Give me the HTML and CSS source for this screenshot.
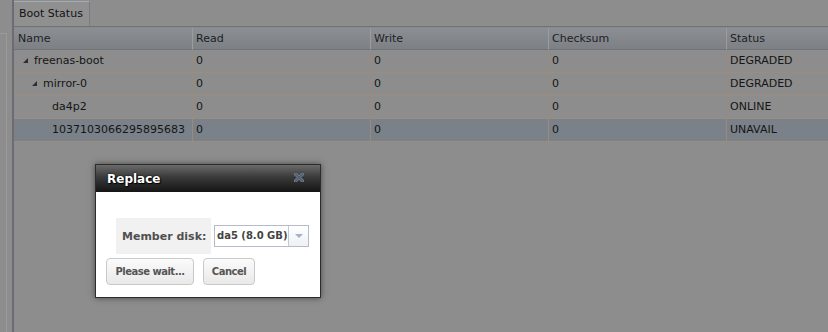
FILE: index.html
```html
<!DOCTYPE html>
<html>
	<head>
		<meta charset="utf-8">
		<title>Boot Status</title>
		<link rel="stylesheet" href="styles.css">
	</head>
	<body>
		<div class="shell">
			<div class="sidebar">
				<div class="sidebar-box"></div>
			</div>
			<div class="main">
				<div class="tabstrip">
					<div class="tab">Boot Status</div>
				</div>
				<div class="grid">
					<div class="row head">
						<div class="cell first">Name</div>
						<div class="cell">Read</div>
						<div class="cell">Write</div>
						<div class="cell">Checksum</div>
						<div class="cell">Status</div>
					</div>
					<div class="row">
						<div class="cell first lvl0"><span class="expando"></span>freenas-boot</div>
						<div class="cell">0</div>
						<div class="cell">0</div>
						<div class="cell">0</div>
						<div class="cell">DEGRADED</div>
					</div>
					<div class="row">
						<div class="cell first lvl1"><span class="expando"></span>mirror-0</div>
						<div class="cell">0</div>
						<div class="cell">0</div>
						<div class="cell">0</div>
						<div class="cell">DEGRADED</div>
					</div>
					<div class="row">
						<div class="cell first lvl2"><span class="leaf"></span>da4p2</div>
						<div class="cell">0</div>
						<div class="cell">0</div>
						<div class="cell">0</div>
						<div class="cell">ONLINE</div>
					</div>
					<div class="row selected">
						<div class="cell first lvl2"><span class="leaf"></span>1037103066295895683</div>
						<div class="cell">0</div>
						<div class="cell">0</div>
						<div class="cell">0</div>
						<div class="cell">UNAVAIL</div>
					</div>
				</div>
			</div>
		</div>

		<div class="dialog">
			<div class="dialog-title">
				<span>Replace</span>
				<svg class="close" width="10" height="9" viewBox="0 0 10 9">
					<path d="M1.5 1 L8.5 8 M8.5 1 L1.5 8" stroke="#6f7d8c" stroke-width="3.2" stroke-linecap="round"/>
					<path d="M1.5 1 L8.5 8 M8.5 1 L1.5 8" stroke="#4f5e70" stroke-width="1.6" stroke-linecap="round"/>
				</svg>
			</div>
			<div class="dialog-body">
				<div class="field">
					<label class="field-label">Member disk:</label>
					<div class="select">
						<span class="select-value">da5 (8.0 GB)</span>
						<span class="select-arrow"></span>
					</div>
				</div>
				<div class="buttons">
					<button class="btn wait">Please wait...</button>
					<button class="btn cancel">Cancel</button>
				</div>
			</div>
		</div>
	</body>
</html>
```

FILE: styles.css
```css
html, body {
	margin: 0;
	height: 100%;
	overflow: hidden;
}

body {
	background: #8d8d8d;
	font-family: "DejaVu Sans", Verdana, sans-serif;
	font-size: 11px;
	color: #151515;
}

.shell {
	display: flex;
	height: 100%;
}

.sidebar {
	width: 12px;
	flex: none;
}

.sidebar-box {
	width: 6px;
	height: calc(100% - 33px);
	margin-top: 33px;
	border-top: 1px solid #9b9b9b;
	border-right: 1px solid #9b9b9b;
}

.main {
	flex: 1;
	border-left: 2px solid #6c6c72;
	overflow: hidden;
}

/* tabs */

.tabstrip {
	height: 27px;
	padding-top: 1px;
	box-sizing: border-box;
	border-bottom: 1px solid #737373;
	display: flex;
}

.tab {
	width: 76px;
	box-sizing: border-box;
	padding-left: 5px;
	border-top: 1px solid #a3abb3;
	border-right: 1px solid #7b7b7b;
	background: #909090;
	line-height: 24px;
	color: #141414;
}

/* grid */

.grid {
	width: 891px;
}

.row {
	display: grid;
	grid-template-columns: 179px repeat(4, 178px);
}

.cell {
	height: 23px;
	box-sizing: border-box;
	padding-left: 3px;
	line-height: 22px;
	white-space: nowrap;
	border-right: 1px solid #998a7d;
	border-bottom: 1px solid #9a8c7f;
}

.cell.first {
	padding-left: 4px;
}

.head {
	border-top: 1px solid #858a90;
	background: linear-gradient(#8b8e92, #7c8084);
}

.head .cell {
	height: 22px;
	line-height: 21px;
	color: #1b1f25;
	border-right-color: #9a9c9e;
	border-bottom-color: #6e7378;
}

.selected {
	background: #7a8189;
}

.cell.lvl0 {
	padding-left: 9px;
}

.cell.lvl1 {
	padding-left: 18px;
}

.cell.lvl2 {
	padding-left: 27px;
}

.leaf {
	display: inline-block;
	width: 11px;
}

.expando {
	display: inline-block;
	width: 0;
	height: 0;
	margin-right: 6px;
	border-left: 5px solid transparent;
	border-bottom: 5px solid #2e2e2e;
	vertical-align: 1px;
}

/* dialog */

.dialog {
	position: absolute;
	left: 95px;
	top: 164px;
	width: 226px;
	box-sizing: border-box;
	border: 1px solid #2c2c2c;
	background: #fff;
	box-shadow: 0 0 6px rgba(0, 0, 0, 0.5);
}

.dialog-title {
	height: 27px;
	display: flex;
	align-items: center;
	justify-content: space-between;
	padding: 0 16px 0 11px;
	background: linear-gradient(#6a6a6a, #3a3a3a 45%, #151515);
	color: #fff;
	font-weight: bold;
	font-size: 12px;
	text-shadow: 0 0 2px #000, 1px 1px 1px #000;
}

.close {
	margin-top: -2px;
}

.dialog-body {
	padding: 26px 10px 12px;
}

.field {
	display: flex;
	align-items: center;
	margin-left: 10px;
}

.field-label {
	width: 95px;
	height: 36px;
	box-sizing: border-box;
	padding-left: 6px;
	display: flex;
	align-items: center;
	background: #f1f1f1;
	color: #505050;
	font-weight: bold;
}

.select {
	width: 95px;
	height: 22px;
	margin-left: 3px;
	box-sizing: border-box;
	border: 1px solid #b4bcc7;
	display: flex;
}

.select-value {
	flex: 1;
	padding-left: 2px;
	line-height: 20px;
	font-weight: bold;
	font-size: 10px;
	color: #444;
}

.select-arrow {
	width: 19px;
	border-left: 1px solid #c2c9d2;
	background: linear-gradient(#fff, #eef0f3);
	position: relative;
}

.select-arrow::after {
	content: "";
	position: absolute;
	left: 6px;
	top: 8px;
	border-left: 4px solid transparent;
	border-right: 4px solid transparent;
	border-top: 4px solid #a3b2c6;
}

.buttons {
	display: flex;
	gap: 9px;
	margin-top: 4px;
}

.btn {
	height: 27px;
	box-sizing: border-box;
	border: 1px solid #c9c9c9;
	border-radius: 4px;
	background: linear-gradient(#fbfbfb, #e9e9e9);
	font-family: "DejaVu Sans", Verdana, sans-serif;
	font-weight: bold;
	font-size: 10px;
	letter-spacing: -0.5px;
	color: #555;
	padding: 0;
}

.wait {
	width: 88px;
}

.cancel {
	width: 52px;
}
```
